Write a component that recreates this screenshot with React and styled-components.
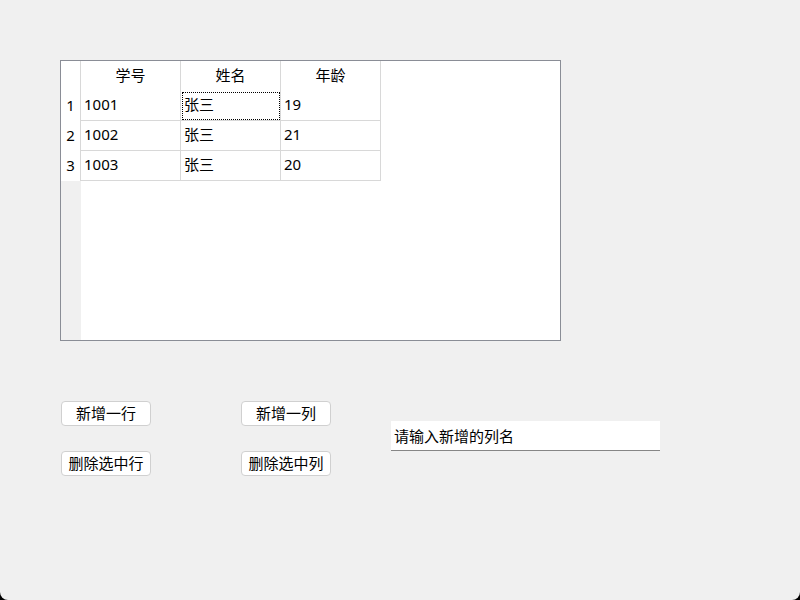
import React from 'react';
import styled, { createGlobalStyle } from 'styled-components';

const GlobalStyle = createGlobalStyle`
  html, body {
    margin: 0;
    padding: 0;
    background: #000;
  }
  body {
    font-family: "Noto Sans", "Noto Sans CJK SC", sans-serif;
    font-size: 15px;
    color: #000;
  }
`;

const Window = styled.div`
  width: 800px;
  height: 600px;
  box-sizing: border-box;
  padding: 60px 0 0 60px;
  background: #f0f0f0;
  border-radius: 0 0 8px 8px;
  display: flex;
  flex-direction: column;
  gap: 60px;
  overflow: hidden;
`;

const TableFrame = styled.div`
  width: 501px;
  height: 281px;
  box-sizing: border-box;
  border: 1px solid #8a8d96;
  background: #fff;
  display: flex;
`;

const RowHeaderColumn = styled.div`
  width: 20px;
  background: #f0f0f0;
  display: flex;
  flex-direction: column;
`;

const RowHeaderCell = styled.div`
  height: 30px;
  box-sizing: border-box;
  padding-bottom: 1px;
  background: #fff;
  border-right: 1px solid #d8d8d8;
  display: flex;
  align-items: center;
  justify-content: center;
  line-height: 1;
`;

const DataArea = styled.div`
  display: flex;
  flex-direction: column;
`;

const Row = styled.div`
  display: flex;
`;

const HeaderCell = styled.div`
  width: 100px;
  height: 30px;
  box-sizing: border-box;
  padding-bottom: 2px;
  border-right: 1px solid #d8d8d8;
  display: flex;
  align-items: center;
  justify-content: center;
  line-height: 1;
`;

const Cell = styled.div`
  width: 100px;
  height: 30px;
  box-sizing: border-box;
  border-right: 1px solid #d8d8d8;
  border-bottom: 1px solid #d8d8d8;
  padding: 0 0 2px 3px;
  display: flex;
  align-items: center;
  line-height: 1;
  outline: ${p => (p.$focused ? '1px dotted #000' : 'none')};
  outline-offset: -2px;
`;

const Controls = styled.div`
  margin-left: 1px;
  display: grid;
  grid-template-columns: 90px 90px 270px;
  grid-template-rows: 25px 25px;
  column-gap: 90px;
  row-gap: 25px;
`;

const Button = styled.button`
  grid-column: ${p => p.$col};
  grid-row: ${p => p.$row};
  width: 90px;
  height: 25px;
  box-sizing: border-box;
  margin: 0;
  padding: 0;
  border: 1px solid #d0d0d0;
  border-radius: 4px;
  background: #fff;
  font: inherit;
  color: #000;
  line-height: 1;
`;

const ColumnInput = styled.input`
  grid-column: 3;
  grid-row: 1 / span 2;
  align-self: start;
  margin: 20px 0 0 -30px;
  width: 269px;
  height: 30px;
  box-sizing: border-box;
  border: none;
  border-bottom: 1px solid #868686;
  background: #fff;
  padding: 0 3px;
  font: inherit;
  color: #000;
  outline: none;
`;

const columns = ['学号', '姓名', '年龄'];
const rows = [
  ['1001', '张三', '19'],
  ['1002', '张三', '21'],
  ['1003', '张三', '20'],
];

export default function App() {
  return (
    <>
      <GlobalStyle />
      <Window>
        <TableFrame>
          <RowHeaderColumn>
            <RowHeaderCell />
            {rows.map((_, i) => (
              <RowHeaderCell key={i}>{i + 1}</RowHeaderCell>
            ))}
          </RowHeaderColumn>
          <DataArea>
            <Row>
              {columns.map(c => (
                <HeaderCell key={c}>{c}</HeaderCell>
              ))}
            </Row>
            {rows.map((r, i) => (
              <Row key={i}>
                {r.map((v, j) => (
                  <Cell key={j} $focused={i === 0 && j === 1}>{v}</Cell>
                ))}
              </Row>
            ))}
          </DataArea>
        </TableFrame>

        <Controls>
          <Button $col={1} $row={1}>新增一行</Button>
          <Button $col={2} $row={1}>新增一列</Button>
          <ColumnInput defaultValue="请输入新增的列名" />
          <Button $col={1} $row={2}>删除选中行</Button>
          <Button $col={2} $row={2}>删除选中列</Button>
        </Controls>
      </Window>
    </>
  );
}
